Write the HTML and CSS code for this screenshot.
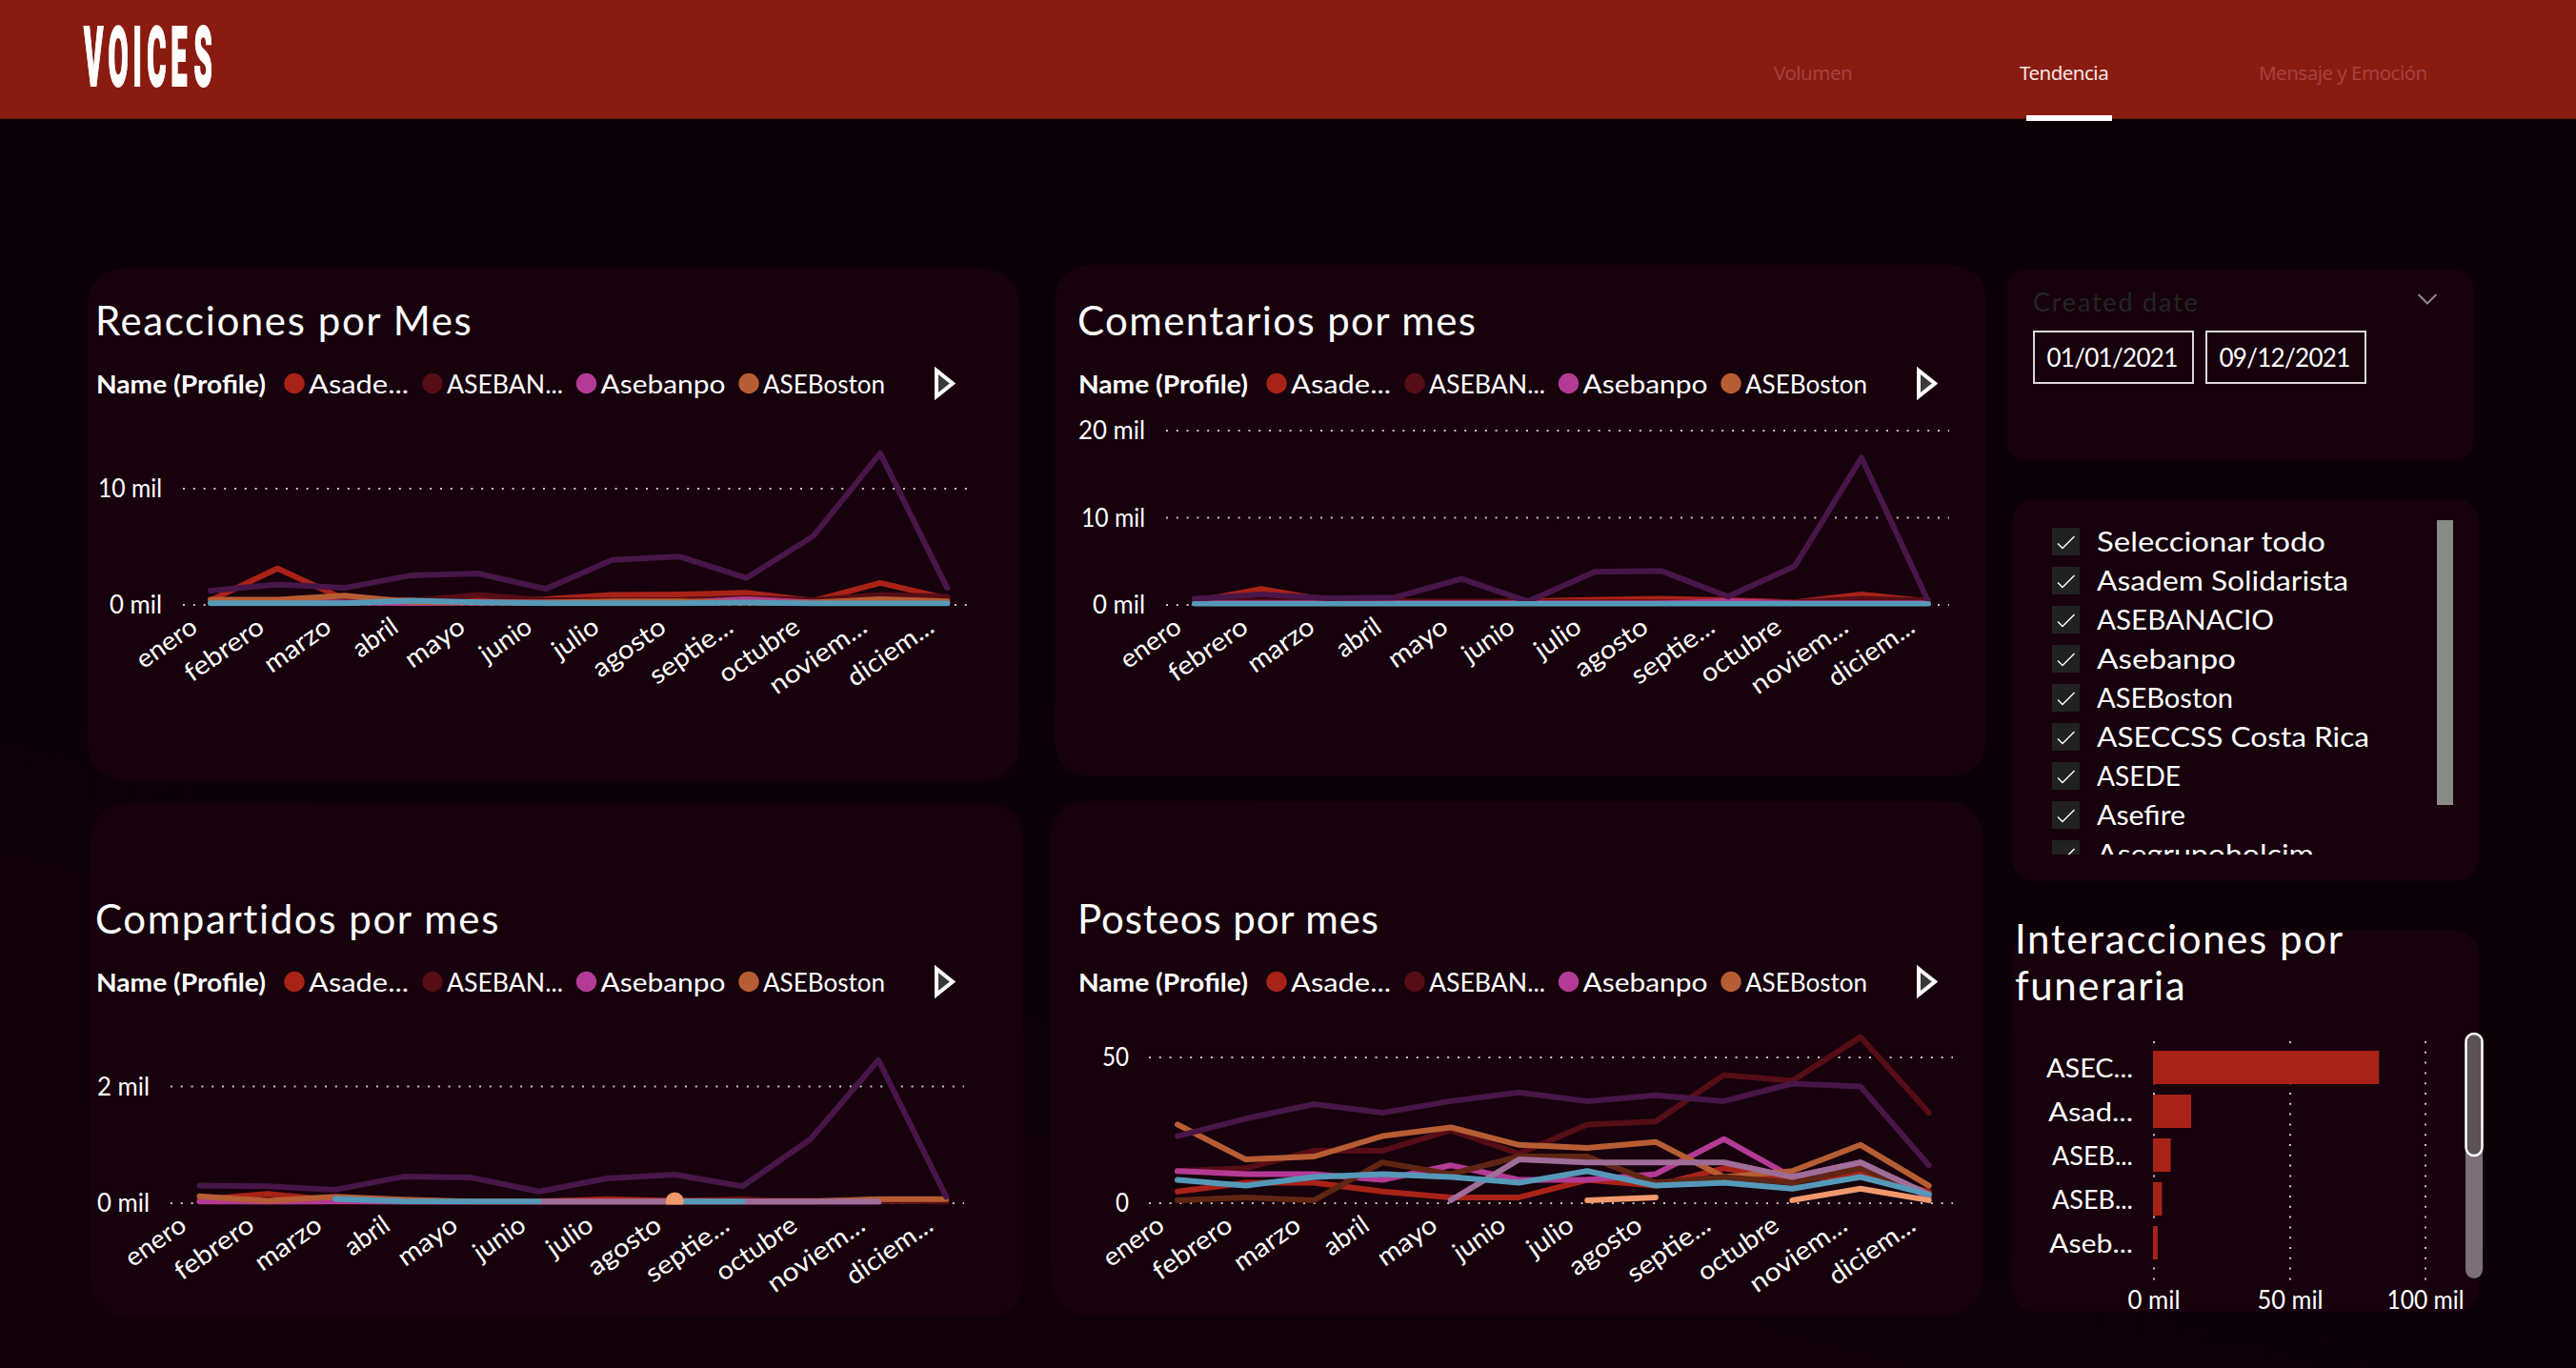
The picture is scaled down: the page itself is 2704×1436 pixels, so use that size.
FILE: index.html
```html
<!DOCTYPE html>
<html lang="es">
<head>
    <meta charset="UTF-8">
    <meta name="viewport" content="width=device-width, initial-scale=1.0">
    <title>Voices - Tendencia</title>
    <link rel="stylesheet" href="styles.css">
</head>
<body>
    <header class="topbar">
        <svg class="logo" width="170" height="100" viewBox="0 0 170 100">
            <text transform="translate(8 0) scale(0.35 1)" x="0 73 147 189 261 330" y="90">VOICES</text>
        </svg>
        <nav>
            <a class="tab">Volumen</a>
            <a class="tab active">Tendencia</a>
            <a class="tab">Mensaje y Emoción</a>
        </nav>
    </header>

    <main>
        <div class="column left">
            <section class="panel reacciones">
                <h2>Reacciones por Mes</h2>
                <svg class="chart" id="reacciones" width="940" height="400"></svg>
            </section>
            <section class="panel compartidos">
                <h2>Compartidos por mes</h2>
                <svg class="chart" id="compartidos" width="940" height="370"></svg>
            </section>
        </div>

        <div class="column middle">
            <section class="panel comentarios">
                <h2>Comentarios por mes</h2>
                <svg class="chart" id="comentarios" width="940" height="400"></svg>
            </section>
            <section class="panel posteos">
                <h2>Posteos por mes</h2>
                <svg class="chart" id="posteos" width="940" height="370"></svg>
            </section>
        </div>

        <div class="column right">
            <section class="panel dates">
                <div class="dates-head">
                    <span>Created date</span>
                    <svg width="22" height="14" viewBox="0 0 22 14"><path d="M1.500 2 L11 11.500 L20.500 2"/></svg>
                </div>
                <div class="date-inputs">
                    <div class="date">01/01/2021</div>
                    <div class="date">09/12/2021</div>
                </div>
            </section>

            <section class="panel profiles">
                <ul id="profileList"></ul>
                <div class="scrollbar"></div>
            </section>

            <section class="panel interacciones">
                <h2>Interacciones por funeraria</h2>
                <svg class="bars" id="bars" width="492" height="310"></svg>
            </section>
        </div>
    </main>
    <script src="charts.js"></script>
</body>
</html>
```
FILE: styles.css
```css
body {
    margin: 0;
    height: 1436px;
    overflow: hidden;
    background: linear-gradient(195deg, #0c0007 50%, #12000a 100%);
    color: #ffffff;
    font-family: "Century Gothic", Lato, sans-serif;
}
h2 {
    margin: 0;
    font-size: 42px;
    font-weight: 400;
    line-height: 50px;
    letter-spacing: 1.6px;
    white-space: nowrap;
}
svg {
    display: block;
}

/* header */
.topbar {
    height: 124px;
    background: #891b10;
    border-bottom: 1px solid #6b1409;
    display: flex;
    justify-content: space-between;
}
.logo {
    margin-left: 80px;
}
.logo text {
    font-family: Roboto, sans-serif;
    font-weight: 900;
    font-size: 88px;
    fill: #ffffff;
    stroke: #ffffff;
    stroke-width: 2;
}
nav {
    display: grid;
    grid-template-columns: 258px 251px auto;
    width: 842px;
}
.tab {
    position: relative;
    padding-top: 61px;
    font-family: "Noto Sans", sans-serif;
    font-size: 20.5px;
    line-height: 30px;
    letter-spacing: -0.5px;
    color: #a8403d;
    white-space: nowrap;
}
.active {
    color: #f6e6e4;
}
.active::after {
    content: "";
    position: absolute;
    left: 7px;
    top: 121px;
    width: 90px;
    height: 6px;
    background: #ffffff;
}

/* panels */
main {
    display: flex;
    align-items: flex-start;
}
.panel {
    background: #16010c;
    border-radius: 36px;
    box-sizing: border-box;
}
.left {
    width: 1107px;
    padding-left: 92px;
    box-sizing: border-box;
}
.middle {
    width: 983px;
}
.right {
    width: 500px;
    margin-left: 16px;
}
.reacciones {
    width: 978px;
    height: 537px;
    margin-top: 157px;
    padding: 29px 0 0 8px;
}
.compartidos {
    width: 979px;
    height: 538px;
    margin: 25px 0 0 3px;
    padding: 95px 0 0 5px;
}
.comentarios {
    width: 978px;
    height: 537px;
    margin-top: 153px;
    padding: 33px 0 0 24px;
}
.posteos {
    width: 978px;
    height: 539px;
    margin: 26px 0 0 -4px;
    padding: 98px 0 0 28px;
}
.comentarios h2 {
    letter-spacing: 1.4px;
}
.posteos h2 {
    letter-spacing: 0.9px;
}
.chart {
    margin: 19px 0 0 1px;
}

/* chart text */
.chart text,
.bars text {
    font-size: 26px;
    fill: #ffffff;
}
.chart .legend-title {
    font-weight: 700;
}
.chart .month {
    font-size: 27px;
    text-anchor: end;
}
.grid {
    stroke: #c9c2c6;
    stroke-width: 2;
    stroke-dasharray: 2 8.8;
}
.series {
    fill: none;
    stroke-width: 6;
    stroke-linecap: round;
    stroke-linejoin: round;
}
.next {
    fill: #3a3a3a;
    stroke: #ffffff;
    stroke-width: 4;
}

/* date slicer */
.dates {
    width: 491px;
    height: 200px;
    margin-top: 158px;
    padding: 17px 38px 0 28px;
    border-radius: 20px;
}
.dates-head {
    display: flex;
    justify-content: space-between;
    height: 47px;
    font-size: 27px;
    line-height: 34px;
    letter-spacing: 1.8px;
    color: #242424;
}
.dates-head svg {
    margin-top: 7px;
    fill: none;
    stroke: #8d878a;
    stroke-width: 2;
}
.date-inputs {
    display: flex;
    gap: 12px;
}
.date {
    width: 169px;
    height: 56px;
    box-sizing: border-box;
    border: 2px solid #ded6da;
    font-size: 26px;
    line-height: 53px;
    letter-spacing: -0.7px;
    padding-right: 3px;
    text-align: center;
}

/* profile slicer */
.profiles {
    display: flex;
    justify-content: space-between;
    width: 490px;
    height: 401px;
    margin: 41px 0 0 6px;
    padding: 22px 27px 0 42px;
    border-radius: 24px;
}
.profiles ul {
    margin: 0;
    padding: 0;
    list-style: none;
    height: 351px;
    overflow: hidden;
}
.profiles li {
    display: flex;
    align-items: center;
    height: 41px;
    padding-top: 2px;
    margin-bottom: -2px;
    font-size: 28px;
    white-space: nowrap;
}
.check {
    width: 29px;
    height: 29px;
    margin-right: 18px;
    background: #212121;
}
.check path {
    fill: none;
    stroke: #ffffff;
    stroke-width: 1.4;
}
.scrollbar {
    width: 17px;
    height: 299px;
    background: #8a8a87;
}

/* bar chart */
.interacciones {
    display: flow-root;
    width: 490px;
    height: 400px;
    margin: 52px 0 0 6px;
    border-radius: 24px;
}
.interacciones h2 {
    width: 400px;
    padding-left: 3px;
    margin-top: -16px;
    line-height: 49px;
    white-space: normal;
}
.bars {
    margin-top: 14px;
    overflow: visible;
}
.bar {
    fill: #a92217;
}
.track {
    fill: #7c6f78;
}
.thumb {
    fill: #5c5258;
    stroke: #ffffff;
    stroke-width: 2.5;
}
```
FILE: charts.js
```js
const MONTHS = ["enero", "febrero", "marzo", "abril", "mayo", "junio", "julio", "agosto", "septie...", "octubre", "noviem...", "diciem..."];
const MONTH_WIDTHS = [71, 95, 79, 51, 70, 60, 53, 87, 100, 97, 118, 104];

const RED = "#a92217";
const WINE = "#560d16";
const PINK = "#b33a95";
const ORANGE = "#b75d34";
const BROWN = "#602513";
const PURPLE = "#481648";
const LILAC = "#9f6d98";
const PEACH = "#f0996d";
const BLUE = "#5599b9";

const LEGEND = [
    { name: "Asade...", color: RED, x: 208, width: 105 },
    { name: "ASEBAN...", color: WINE, x: 353, width: 122 },
    { name: "Asebanpo", color: PINK, x: 514.5, width: 131 },
    { name: "ASEBoston", color: ORANGE, x: 685, width: 128 }
];

function text(x, y, label, width, extra) {
    return `<text x="${x}" y="${y}" textLength="${width}" lengthAdjust="spacingAndGlyphs" ${extra || ""}>${label}</text>`;
}

function drawLineChart(id, chart) {
    let svg = text(0, 33, "Name (Profile)", 178, 'class="legend-title"');
    LEGEND.forEach(item => {
        svg += `<circle cx="${item.x}" cy="22.5" r="10.7" fill="${item.color}"/>`;
        svg += text(item.x + 15, 33, item.name, item.width);
    });
    svg += '<path class="next" d="M882 9 V36 L899 22.5 Z"/>';

    const zero = 255;
    chart.ticks.forEach(tick => {
        svg += `<line class="grid" x1="${chart.grid[0]}" x2="${chart.grid[1]}" y1="${tick.y}" y2="${tick.y}"/>`;
        svg += text(chart.labelEnd - tick.width, tick.y + 9, tick.label, tick.width);
    });

    // lines are cut off at the axis
    svg += `<clipPath id="${id}Clip"><rect x="0" y="0" width="940" height="${zero + 1.5}"/></clipPath>`;
    svg += `<g clip-path="url(#${id}Clip)">`;
    chart.series.forEach(([color, values]) => {
        let d = "";
        let pen = "M";
        values.forEach((value, i) => {
            if (value === null) {
                pen = "M";
                return;
            }
            d += `${pen}${(chart.x0 + i * chart.step).toFixed(1)} ${(zero - value * chart.unit).toFixed(1)} `;
            pen = "L";
        });
        svg += `<path class="series" stroke="${color}" d="${d}"/>`;
    });
    if (chart.dot !== undefined) {
        svg += `<circle cx="${chart.x0 + chart.dot * chart.step}" cy="${zero - 2}" r="9.5" fill="${PEACH}"/>`;
    }
    svg += "</g>";

    MONTHS.forEach((month, i) => {
        const x = chart.x0 + i * chart.step - 12;
        const y = zero + 27;
        svg += text(x.toFixed(1), y, month, MONTH_WIDTHS[i], `class="month" transform="rotate(-35 ${x.toFixed(1)} ${y})"`);
    });
    document.getElementById(id).innerHTML = svg;
}

drawLineChart("reacciones", {
    x0: 120, step: 70.3, grid: [91, 914], labelEnd: 69, unit: 12.2,
    ticks: [{ label: "10 mil", y: 133, width: 67 }, { label: "0 mil", y: 255, width: 55 }],
    series: [
        [RED, [0.4, 3.14, 0.5, 0.4, 0.4, 0.5, 0.85, 0.9, 1.05, 0.35, 1.9, 0.55]],
        [WINE, [0.4, 0.4, 0.3, 0.35, 0.85, 0.4, 0.4, 0.4, 0.6, 0.4, 0.85, 0.7]],
        [PINK, [0.3, 0.3, 0.2, 0.15, 0.2, 0.2, 0.2, 0.2, 0.5, 0.2, 0.2, 0.2]],
        [ORANGE, [0.45, 0.45, 0.8, 0.25, 0.2, 0.2, 0.3, 0.3, 0.2, 0.2, 0.5, 0.3]],
        [PURPLE, [1.23, 1.76, 1.47, 2.55, 2.7, 1.38, 3.87, 4.16, 2.32, 5.92, 13.05, 1.44]],
        [BLUE, [0.15, 0.15, 0.15, 0.38, 0.22, 0.15, 0.15, 0.15, 0.2, 0.12, 0.12, 0.12]]
    ]
});

drawLineChart("comentarios", {
    x0: 122, step: 70, grid: [92, 914], labelEnd: 70, unit: 9.15,
    ticks: [
        { label: "20 mil", y: 72, width: 70 },
        { label: "10 mil", y: 163.5, width: 67 },
        { label: "0 mil", y: 255, width: 55 }
    ],
    series: [
        [RED, [0.4, 1.85, 0.5, 0.4, 0.3, 0.4, 0.6, 0.7, 0.55, 0.3, 1.2, 0.4]],
        [WINE, [0.4, 0.4, 0.3, 0.35, 0.4, 0.3, 0.3, 0.3, 0.3, 0.3, 0.7, 0.5]],
        [PINK, [0.2, 0.2, 0.2, 0.2, 0.2, 0.2, 0.2, 0.2, 0.4, 0.2, 0.2, 0.2]],
        [PURPLE, [0.7, 1.2, 0.75, 0.85, 3, 0.4, 3.8, 3.9, 0.95, 4.45, 16.9, 0.4]],
        [BLUE, [0.12, 0.12, 0.12, 0.12, 0.12, 0.12, 0.12, 0.12, 0.12, 0.12, 0.12, 0.12]]
    ]
});

drawLineChart("compartidos", {
    x0: 108.5, step: 71.25, grid: [78, 911], labelEnd: 56, unit: 61.2, dot: 7,
    ticks: [{ label: "2 mil", y: 132.6, width: 55 }, { label: "0 mil", y: 255, width: 55 }],
    series: [
        [RED, [0.06, 0.16, 0.05, 0.03, 0.03, 0.03, 0.07, 0.04, 0.06, 0.03, 0.05, 0.03]],
        [WINE, [0.03, 0.03, 0.03, 0.03, 0.03, 0.03, 0.03, 0.03, 0.05, 0.05, 0.04, 0.03]],
        [PINK, [0.03, 0.02, 0.03, 0.02, 0.02, 0.02, 0.02, 0.02, 0.02, 0.02, 0.02, null]],
        [ORANGE, [0.12, 0.04, 0.11, 0.06, 0.03, 0.03, 0.03, 0.03, 0.03, 0.03, 0.07, 0.07]],
        [PURPLE, [0.3, 0.29, 0.23, 0.456, 0.44, 0.2, 0.425, 0.49, 0.29, 1.1, 2.456, 0.11]],
        [LILAC, [null, null, null, null, null, 0.03, 0.03, 0.03, 0.03, 0.03, 0.03, null]],
        [BLUE, [null, null, 0.075, 0.035, 0.03, 0.03, null, 0.03, 0.03, null, null, null]]
    ]
});

drawLineChart("posteos", {
    x0: 104, step: 71.7, grid: [74, 918], labelEnd: 53, unit: 3.06,
    ticks: [{ label: "50", y: 102, width: 28 }, { label: "0", y: 255, width: 14 }],
    series: [
        [RED, [4, 7, 7, 4, 2, 2, 8, 6, 12, 8, 10, 4]],
        [WINE, [11, 12, 18, 18, 25, 17, 27, 28, 44, 42, 57, 31]],
        [PINK, [11, 10, 10, 8, 13, 8, 8, 10, 22, 9, 14, 2]],
        [ORANGE, [27, 15, 16, 23, 26, 20, 19, 21, 9, 11, 20, 6]],
        [BROWN, [1, 2, 1, 14, 10, 16, 16, 7, 9, 7, 12, 3]],
        [PURPLE, [23, 29, 34, 31, 35, 38, 35, 37, 35, 41, 40, 13]],
        [LILAC, [null, null, null, null, 1, 15, 14, 14, 14, 9, 14, 3]],
        [PEACH, [null, null, null, null, null, null, 1, 2, null, 1, 5, 1]],
        [BLUE, [8, 6, 9, 10, 9, 7, 11, 6, 7, 5, 9, 3]]
    ]
});

// profile slicer
const PROFILES = ["Seleccionar todo", "Asadem Solidarista", "ASEBANACIO", "Asebanpo", "ASEBoston", "ASECCSS Costa Rica", "ASEDE", "Asefire", "Asegrupoholcim"];
const PROFILE_WIDTHS = [240, 264, 186, 146, 143, 286, 88, 93, 228];
document.getElementById("profileList").innerHTML = PROFILES.map((name, i) =>
    `<li><svg class="check" viewBox="0 0 29 29"><path d="M6 16.500 L11 21.500 L23.500 9"/></svg>
    <svg width="300" height="41"><text x="0" y="30.500" fill="#fff" textLength="${PROFILE_WIDTHS[i]}" lengthAdjust="spacingAndGlyphs">${name}</text></svg></li>`
).join("");

// bar chart
const BARS = [
    { name: "ASEC...", value: 83, width: 91 },
    { name: "Asad...", value: 14, width: 89 },
    { name: "ASEB...", value: 6.5, width: 85 },
    { name: "ASEB...", value: 3.3, width: 85 },
    { name: "Aseb...", value: 1.7, width: 88 }
];
const AXIS = [
    { label: "0 mil", x: 149, width: 55 },
    { label: "50 mil", x: 292, width: 69 },
    { label: "100 mil", x: 434, width: 81 }
];
let bars = "";
AXIS.forEach(tick => {
    bars += `<line class="grid" x1="${tick.x}" x2="${tick.x}" y1="20" y2="272"/>`;
    bars += text(tick.x - tick.width / 2, 301, tick.label, tick.width);
});
BARS.forEach((bar, i) => {
    const y = 30 + i * 46;
    bars += `<rect class="bar" x="148" y="${y}" width="${bar.value * 2.86}" height="35"/>`;
    bars += text(127 - bar.width, y + 28, bar.name, bar.width);
});
bars += '<rect class="track" x="476" y="11" width="18" height="258" rx="9"/>';
bars += '<rect class="thumb" x="476.500" y="12" width="17" height="128" rx="8.500"/>';
document.getElementById("bars").innerHTML = bars;
```
